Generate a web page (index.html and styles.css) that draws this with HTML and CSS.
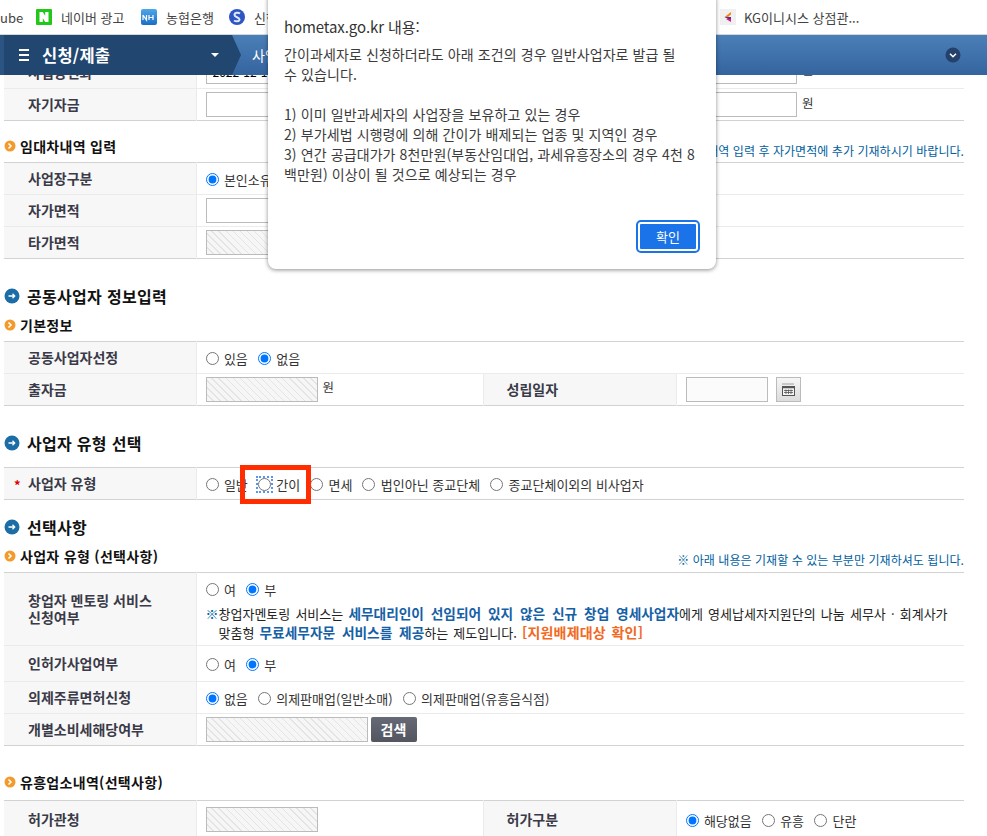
FILE: index.html
```html
<!DOCTYPE html>
<html lang="ko">
<head>
<meta charset="utf-8">
<title>신청/제출</title>
<link rel="stylesheet" href="styles.css">
</head>
<body>
<nav class="bookmarks">
  <span class="bm bm-first">ube</span>
  <span class="bm bm-naver"><svg class="fav" viewBox="0 0 16 16"><rect width="16" height="16" rx="1" fill="#22c71a"/><path d="M3.500 3h3.300l2.400 3.800V3h3.300v10H9.200L6.800 9.200V13H3.500z" fill="#fff"/></svg>네이버 광고</span>
  <span class="bm bm-nh"><svg class="fav" viewBox="0 0 16 16"><defs><linearGradient id="nh" x1="0" y1="0" x2="0" y2="1"><stop offset="0" stop-color="#4ea7ea"/><stop offset="1" stop-color="#1b6fc4"/></linearGradient></defs><rect width="16" height="16" rx="2" fill="url(#nh)"/><path d="M2 6v5M2 6l3.500 5V6M8 6v5M12 6v5M8 8.500h4" fill="none" stroke="#fff" stroke-width="1.200"/></svg>농협은행</span>
  <span class="bm bm-sh"><svg class="fav" viewBox="0 0 16 16"><circle cx="8" cy="8" r="8" fill="#2f55c4"/><path d="M11 4.500C9 3 5.500 3.500 5.500 6c0 2.500 5 2 5 4.500 0 2-3.500 2.200-5.500 1" fill="none" stroke="#dfe8f8" stroke-width="2"/></svg>신한은행</span>
  <span class="bm bm-kg"><svg class="fav fav-kg" viewBox="0 0 16 16"><rect width="16" height="16" fill="#f0f0f0"/><path d="M11 3 L4.500 8 L8 8 L11 5.500z" fill="#f28a12"/><path d="M4.500 8 L11 8 L11 10 L8 10z" fill="#5a2d91"/><path d="M6 10 L11 10 L11 13z" fill="#e5177b"/></svg>KG이니시스 상점관...</span>
</nav>

<header class="topbar">
  <div class="topbar-left">
    <span class="burger"><i></i><i></i><i></i></span>
    <span class="topbar-title">신청/제출</span>
    <span class="caret"></span>
  </div>
  <span class="topbar-crumb">사업자등록신청</span>
  <svg class="topbar-more" viewBox="0 0 16 16"><circle cx="8" cy="8" r="7.500" fill="#23416a"/><path d="M5 6.800 8 9.800 11 6.800" fill="none" stroke="#fff" stroke-width="1.500"/></svg>
</header>

<main class="page">
  <table class="form form-first">
    <colgroup><col class="c-th"><col></colgroup>
    <tr><th>사업장전화</th><td><input class="field field-wide" value="2022-12-14"> 원</td></tr>
    <tr><th>자기자금</th><td><input class="field field-wide"> 원</td></tr>
  </table>

  <div class="sub-head sub-a">
    <h3><svg class="ico-o" viewBox="0 0 12 12"><circle cx="6" cy="6" r="5.500" fill="#f39a2b"/><path d="M4.500 3.500 7 6 4.500 8.500" fill="none" stroke="#fff" stroke-width="1.500"/></svg>임대차내역 입력</h3>
    <p class="note">※ 임대차내역 입력 후 자가면적에 추가 기재하시기 바랍니다.</p>
  </div>
  <table class="form">
    <colgroup><col class="c-th"><col></colgroup>
    <tr><th>사업장구분</th><td><label class="opt"><input type="radio" name="a" checked>본인소유</label></td></tr>
    <tr><th>자가면적</th><td><input class="field field-s"></td></tr>
    <tr><th>타가면적</th><td><span class="hatch field-s"></span></td></tr>
  </table>

  <h2 class="main-head mh-a"><svg class="ico-b" viewBox="0 0 16 16"><circle cx="8" cy="8" r="7.500" fill="#1c6ca6"/><path d="M4.500 8h6M8.500 5.800 10.700 8 8.500 10.200" fill="none" stroke="#fff" stroke-width="1.300"/></svg>공동사업자 정보입력</h2>
  <div class="sub-head sub-b">
    <h3><svg class="ico-o" viewBox="0 0 12 12"><circle cx="6" cy="6" r="5.500" fill="#f39a2b"/><path d="M4.500 3.500 7 6 4.500 8.500" fill="none" stroke="#fff" stroke-width="1.500"/></svg>기본정보</h3>
  </div>
  <table class="form">
    <colgroup><col class="c-th"><col class="c-td"><col class="c-th2"><col></colgroup>
    <tr><th>공동사업자선정</th><td colspan="3"><label class="opt"><input type="radio" name="b">있음</label><label class="opt"><input type="radio" name="b" checked>없음</label></td></tr>
    <tr><th>출자금</th><td><span class="hatch field-s"></span><span class="unit">원</span></td><th class="th2">성립일자</th><td><input class="field field-date"><button class="cal" type="button" aria-label="달력"><svg viewBox="0 0 15 15"><path d="M1.500 2h12" stroke="#555" stroke-dasharray="1 1"/><rect x="1.500" y="4.500" width="12" height="9" fill="#f4f4f4" stroke="#555"/><path d="M1.500 5.500h12" stroke="#555" stroke-width="1.500"/><path d="M3 8.500h9M3 10.500h9M5 7.500v4.500M7.500 7.500v4.500M10 7.500v4.500" stroke="#555" stroke-width=".8"/></svg></button></td></tr>
  </table>

  <h2 class="main-head mh-b"><svg class="ico-b" viewBox="0 0 16 16"><circle cx="8" cy="8" r="7.500" fill="#1c6ca6"/><path d="M4.500 8h6M8.500 5.800 10.700 8 8.500 10.200" fill="none" stroke="#fff" stroke-width="1.300"/></svg>사업자 유형 선택</h2>
  <table class="form">
    <colgroup><col class="c-th"><col></colgroup>
    <tr><th class="req">사업자 유형</th><td><label class="opt"><input type="radio" name="c">일반</label><label class="opt"><input type="radio" name="c" class="focus">간이</label><label class="opt"><input type="radio" name="c">면세</label><label class="opt"><input type="radio" name="c">법인아닌 종교단체</label><label class="opt"><input type="radio" name="c">종교단체이외의 비사업자</label></td></tr>
  </table>

  <h2 class="main-head mh-c"><svg class="ico-b" viewBox="0 0 16 16"><circle cx="8" cy="8" r="7.500" fill="#1c6ca6"/><path d="M4.500 8h6M8.500 5.800 10.700 8 8.500 10.200" fill="none" stroke="#fff" stroke-width="1.300"/></svg>선택사항</h2>
  <div class="sub-head sub-c">
    <h3><svg class="ico-o" viewBox="0 0 12 12"><circle cx="6" cy="6" r="5.500" fill="#f39a2b"/><path d="M4.500 3.500 7 6 4.500 8.500" fill="none" stroke="#fff" stroke-width="1.500"/></svg>사업자 유형 (선택사항)</h3>
    <p class="note">※ 아래 내용은 기재할 수 있는 부분만 기재하셔도 됩니다.</p>
  </div>
  <table class="form">
    <colgroup><col class="c-th"><col></colgroup>
    <tr class="row-mentor"><th>창업자 멘토링 서비스<br>신청여부</th><td class="mentor">
      <div class="opts"><label class="opt"><input type="radio" name="d">여</label><label class="opt"><input type="radio" name="d" checked>부</label></div>
      <p class="mentor-text"><span class="mark">※</span>창업자멘토링 서비스는 <b>세무대리인이 선임되어 있지 않은 신규 창업 영세사업자</b>에게 영세납세자지원단의 나눔 세무사 · 회계사가<br>맞춤형 <b>무료세무자문 서비스를 제공</b>하는 제도입니다. <a class="link">[지원배제대상 확인]</a></p>
    </td></tr>
    <tr class="row-36"><th>인허가사업여부</th><td><label class="opt"><input type="radio" name="e">여</label><label class="opt"><input type="radio" name="e" checked>부</label></td></tr>
    <tr><th>의제주류면허신청</th><td><label class="opt"><input type="radio" name="f" checked>없음</label><label class="opt"><input type="radio" name="f">의제판매업(일반소매)</label><label class="opt"><input type="radio" name="f">의제판매업(유흥음식점)</label></td></tr>
    <tr><th>개별소비세해당여부</th><td><span class="hatch field-m"></span><button class="search" type="button">검색</button></td></tr>
  </table>

  <div class="sub-head sub-d">
    <h3><svg class="ico-o" viewBox="0 0 12 12"><circle cx="6" cy="6" r="5.500" fill="#f39a2b"/><path d="M4.500 3.500 7 6 4.500 8.500" fill="none" stroke="#fff" stroke-width="1.500"/></svg>유흥업소내역(선택사항)</h3>
  </div>
  <table class="form">
    <colgroup><col class="c-th"><col class="c-td"><col class="c-th2"><col></colgroup>
    <tr class="row-38"><th>허가관청</th><td><span class="hatch field-s"></span></td><th class="th2">허가구분</th><td><label class="opt"><input type="radio" name="g" checked>해당없음</label><label class="opt"><input type="radio" name="g">유흥</label><label class="opt"><input type="radio" name="g">단란</label></td></tr>
  </table>
</main>

<div class="redbox"></div>

<section class="dialog" role="alertdialog">
  <h4 class="dialog-title">hometax.go.kr 내용:</h4>
  <p class="dialog-body">간이과세자로 신청하더라도 아래 조건의 경우 일반사업자로 발급 될<br>수 있습니다.<br><br>1) 이미 일반과세자의 사업장을 보유하고 있는 경우<br>2) 부가세법 시행령에 의해 간이가 배제되는 업종 및 지역인 경우<br>3) 연간 공급대가가 8천만원(부동산임대업, 과세유흥장소의 경우 4천 8<br>백만원) 이상이 될 것으로 예상되는 경우</p>
  <div class="dialog-actions"><button class="ok" type="button">확인</button></div>
</section>
</body>
</html>
```

FILE: styles.css
```css
* { box-sizing: border-box; }
html, body { margin: 0; padding: 0; }
body {
  width: 987px;
  height: 836px;
  overflow: hidden;
  position: relative;
  background: #fff;
  font-family: "Noto Sans CJK KR", "Noto Sans", sans-serif;
  font-size: 13px;
  color: #333;
}

/* bookmarks */
.bookmarks {
  height: 35px;
  background: #fff;
  border-bottom: 1px solid #d6d6d6;
  display: flex;
  align-items: center;
  font-size: 13px;
  color: #444;
  position: relative;
  z-index: 3;
  white-space: nowrap;
}
.bm { display: inline-flex; align-items: center; }
.fav { width: 16px; height: 16px; margin-right: 9px; flex: none; }
.fav-kg { margin-right: 8px; }
.bm-first { width: 36px; }
.bm-naver { width: 105px; }
.bm-nh { width: 88px; }
.bm-sh { width: 491px; }

/* top bar */
.topbar {
  height: 40px;
  display: flex;
  align-items: center;
  background: linear-gradient(#4b7fb8, #34649e);
  color: #fff;
  position: relative;
  z-index: 2;
}
.topbar-left {
  width: 241px;
  height: 40px;
  background: #21466f;
  border-left: 4px solid #2c5483;
  clip-path: polygon(0 0, 232px 0, 241px 20px, 232px 40px, 0 40px);
  display: flex;
  align-items: center;
  padding-left: 15px;
}
.burger { display: flex; flex-direction: column; gap: 3px; width: 10px; margin-right: 13px; }
.burger i { display: block; height: 2px; background: #fff; }
.topbar-title { font-size: 16.500px; font-weight: 700; letter-spacing: .2px; }
.caret {
  margin-left: auto;
  margin-right: 22px;
  border-left: 4px solid transparent;
  border-right: 4px solid transparent;
  border-top: 4px solid #fff;
}
.topbar-crumb { margin-left: 11px; font-size: 14px; white-space: nowrap; }
.topbar-more { width: 16px; height: 16px; margin-left: auto; margin-right: 26px; }

/* page */
.page { padding: 0 23px 0 4px; margin-top: -19px; }

.form {
  width: 960px;
  table-layout: fixed;
  border-collapse: collapse;
  border-top: 1px solid #d2d2d2;
  border-bottom: 1px solid #d2d2d2;
}
.c-th { width: 192px; }
.c-td { width: 287px; }
.c-th2 { width: 193px; }
.form tr { height: 32px; }
.form tr + tr th, .form tr + tr td { border-top: 1px solid #ebebeb; }
.form th {
  background: #f7f7f7;
  border-right: 1px solid #ebebeb;
  text-align: left;
  padding: 1px 0 0 24px;
  font-size: 14px;
  line-height: 17px;
  font-weight: 700;
  color: #3a3a48;
  position: relative;
}
.form td {
  padding: 0 0 0 9px;
  font-size: 12.500px;
  color: #333;
  white-space: nowrap;
}
.form th.th2 { border-left: 1px solid #ebebeb; padding-left: 23px; }
.form-first { border-top: 0; }
.form th.req::before {
  content: "*";
  position: absolute;
  left: 10px;
  top: 8px;
  color: #d00;
  font-size: 13px;
}

.field {
  height: 25px;
  border: 1px solid #bbb;
  background: #fff;
  padding: 0 6px;
  font: 12px "Noto Sans CJK KR", sans-serif;
  vertical-align: middle;
  outline: 0;
}
.field-wide { width: 591px; margin-right: 2px; }
.field-s { width: 112px; }
.field-m { width: 162px; }
.field-date { width: 82px; background: #fbfbfb; }
.hatch {
  display: inline-block;
  height: 25px;
  vertical-align: middle;
  border: 1px solid #bbb;
  background: repeating-linear-gradient(45deg, #f6f6f6 0 4px, #e4e4e4 4px 5px);
}
.unit { margin-left: 5px; }
.cal {
  width: 25px;
  height: 25px;
  margin-left: 8px;
  padding: 4px;
  vertical-align: middle;
  background: linear-gradient(#f6f6f6, #dcdcdc);
  border: 1px solid #bbb;
}
.cal svg { display: block; width: 15px; height: 15px; }

.opt { display: inline-flex; align-items: center; margin-right: 10px; font-size: 13px; color: #333; vertical-align: middle; }
.opt input { margin: 0 5.400px 0 0; width: 13px; height: 13px; flex: none; }
.focus { outline: 2px dotted #5b93ef; outline-offset: 0; }

.sub-head { display: flex; justify-content: space-between; align-items: flex-end; }
.sub-head h3 {
  margin: 0;
  display: flex;
  align-items: center;
  font-size: 14px;
  line-height: 18px;
  font-weight: 700;
  letter-spacing: .3px;
  color: #111;
}
.ico-o { width: 12px; height: 12px; margin-right: 4px; }
.note { margin: 0 0 -4px; font-size: 12px; line-height: 16px; letter-spacing: .05px; color: #00609e; white-space: nowrap; }
.sub-a { height: 41px; padding-bottom: 7px; }
.sub-b { margin-top: 10px; height: 25px; padding-bottom: 7px; }
.sub-c { height: 35px; padding-bottom: 7px; }
.sub-c .note { margin-bottom: -3px; }
.sub-d { height: 54px; padding-bottom: 9px; }

.main-head {
  margin: 0;
  display: flex;
  align-items: center;
  font-size: 16px;
  line-height: 20px;
  font-weight: 700;
  letter-spacing: .3px;
  color: #111;
}
.ico-b { width: 16px; height: 16px; margin: 0 7px 0 0; }
.mh-a { margin-top: 27px; }
.mh-b { margin-top: 27px; margin-bottom: 14px; }
.mh-c { margin-top: 17px; }

.row-mentor { height: 73px !important; }
.row-36 { height: 36px !important; }
.row-38 { height: 38px !important; }
.opts { height: 29px; display: flex; align-items: center; }
.mentor-text { margin: 0; padding-left: 13px; text-indent: -13px; font-size: 13px; line-height: 18px; word-spacing: 1.500px; color: #222; }
.mark { color: #00609e; display: inline-block; width: 13px; text-indent: 0; }
.mentor-text b { color: #1560a6; font-size: 13.700px; word-spacing: 3px; }
.link { color: #f2691f; font-weight: 700; font-size: 14px; letter-spacing: .2px; }
.search {
  width: 46px;
  height: 25px;
  margin-left: 3px;
  vertical-align: middle;
  border: 0;
  border-radius: 2px;
  background: linear-gradient(#666a76, #53565f);
  color: #fff;
  font: 700 14px "Noto Sans CJK KR", sans-serif;
  padding: 0;
}

/* annotation */
.redbox {
  position: absolute;
  left: 240px;
  top: 465px;
  width: 71px;
  height: 39px;
  border: 5px solid #ff2d00;
  z-index: 1;
}

/* alert */
.dialog {
  position: absolute;
  left: 268px;
  top: -8px;
  width: 448px;
  height: 277px;
  padding: 25px 16px 0;
  background: #fff;
  border-radius: 8px;
  box-shadow: 0 1px 4px rgba(0,0,0,.45);
  z-index: 5;
  display: flex;
  flex-direction: column;
}
.dialog-title {
  margin: 0 0 7px;
  font-size: 15px;
  line-height: 20px;
  font-weight: 400;
  letter-spacing: -.1px;
  color: #333;
}
.dialog-body {
  margin: 0;
  font-size: 14px;
  line-height: 20px;
  letter-spacing: .1px;
  color: #3c3c3c;
  white-space: nowrap;
  flex: 1;
}
.dialog-actions { display: flex; justify-content: flex-end; padding-bottom: 16px; }
.ok {
  width: 64px;
  height: 33px;
  border: 2px solid #1a73e8;
  outline: 2px solid #fff;
  outline-offset: -4px;
  border-radius: 5px;
  background: #1a73e8;
  color: #fff;
  font: 13px "Noto Sans CJK KR", sans-serif;
}
```
